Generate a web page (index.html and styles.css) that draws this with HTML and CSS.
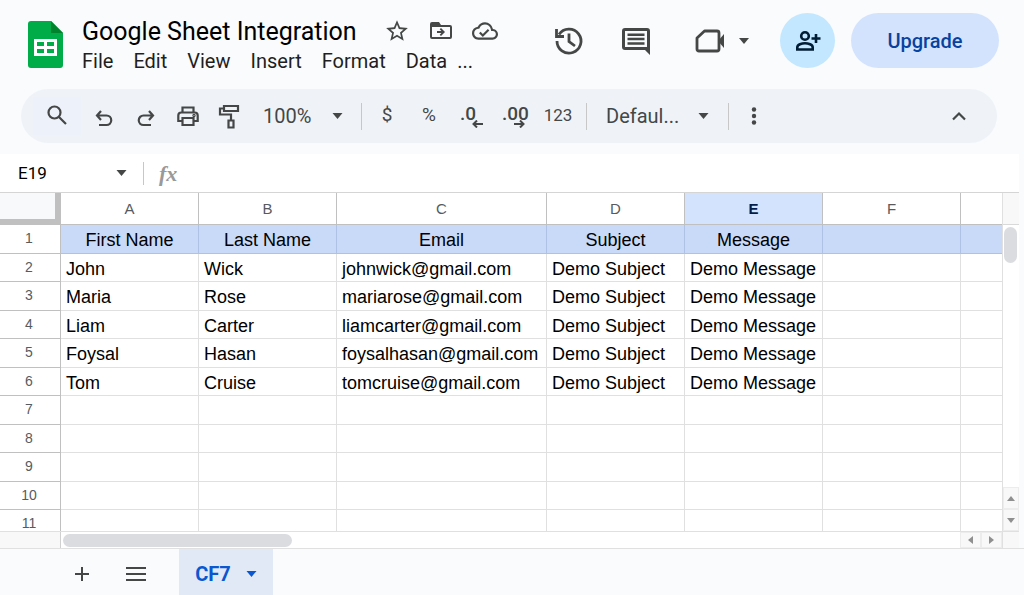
FILE: index.html
```html
<!DOCTYPE html>
<html lang="en">
<head>
    <meta charset="UTF-8">
    <meta name="viewport" content="width=device-width, initial-scale=1.0">
    <title>Google Sheet Integration</title>
    <link rel="stylesheet" href="styles.css">
</head>
<body>
    <header class="header">
        <svg class="logo" width="35" height="47" viewBox="0 0 35 47">
            <path fill="#00ac47" d="M3 0h20l12 12v32a3 3 0 0 1-3 3H3a3 3 0 0 1-3-3V3a3 3 0 0 1 3-3z"/>
            <path fill="#00832d" d="M23 0l12 12H23z"/>
            <path fill="#fff" fill-rule="evenodd" d="M6 18h23v17H6zM9 21v4h7v-4zM19 21v4h7v-4zM9 28v4h7v-4zM19 28v4h7v-4z"/>
        </svg>
        <div class="doc">
            <div class="title-row">
                <h1>Google Sheet Integration</h1>
                <button class="mini" aria-label="Star">
                    <svg width="26" height="26" viewBox="0 0 24 24"><path d="M22 9.24l-7.19-.62L12 2 9.19 8.63 2 9.24l5.46 4.73L5.82 21 12 17.27 18.18 21l-1.63-7.03L22 9.24zM12 15.4l-3.76 2.27 1-4.28-3.32-2.88 4.38-.38L12 6.1l1.71 4.04 4.38.38-3.32 2.88 1 4.28L12 15.4z"/></svg>
                </button>
                <button class="mini" aria-label="Move">
                    <svg width="26" height="24" viewBox="0 0 26 24"><path fill-rule="evenodd" d="M4 3h7l2 3h9a2 2 0 0 1 2 2v10a2 2 0 0 1-2 2H4a2 2 0 0 1-2-2V5a2 2 0 0 1 2-2zM4 8v10h18V8zM13 9l4 4-4 4-1.300-1.300L13.400 14H9v-2h4.400l-1.700-1.700z"/></svg>
                </button>
                <button class="mini" aria-label="Document status">
                    <svg width="26" height="24" viewBox="0 0 24 22"><path d="M19.350 9.040A7.490 7.490 0 0 0 12 3C9.110 3 6.600 4.640 5.350 7.040A5.990 5.990 0 0 0 0 13c0 3.310 2.690 6 6 6h13c2.760 0 5-2.240 5-5 0-2.640-2.050-4.780-4.650-4.960zM19 17H6c-2.210 0-4-1.790-4-4 0-2.050 1.530-3.760 3.560-3.970l1.070-.11.5-.95A5.469 5.469 0 0 1 12 5c2.620 0 4.880 1.860 5.390 4.430l.3 1.500 1.530.11A2.980 2.980 0 0 1 22 14c0 1.650-1.350 3-3 3zm-9-3.200l-2.100-2.100-1.400 1.400L10 16.600l6-6-1.400-1.400z"/></svg>
                </button>
            </div>
            <nav class="menu">
                <button>File</button>
                <button>Edit</button>
                <button>View</button>
                <button>Insert</button>
                <button>Format</button>
                <button>Data</button>
                <button class="more">...</button>
            </nav>
        </div>
        <div class="actions">
            <button aria-label="Version history">
                <svg width="32" height="32" viewBox="0 0 32 32" fill="none" stroke="#444746" stroke-width="2.800">
                    <path d="M6 9.500A12 12 0 1 1 4 16"/>
                    <path d="M3.500 4v7.500H11"/>
                    <path d="M16 8.500v8l6 4.500"/>
                </svg>
            </button>
            <button aria-label="Comments">
                <svg width="32" height="32" viewBox="0 0 32 32">
                    <path fill-rule="evenodd" d="M5 3h22a3 3 0 0 1 3 3v24l-5-5H5a3 3 0 0 1-3-3V6a3 3 0 0 1 3-3zM5 6v16h22V6z"/>
                    <path d="M7.500 8.500h17v2.500h-17zM7.500 12.800h17v2.500h-17zM7.500 17.200h17v2.500h-17z"/>
                </svg>
            </button>
            <button class="meet" aria-label="Join a call">
                <svg width="30" height="30" viewBox="0 0 30 30">
                    <path fill="none" stroke="#444746" stroke-width="2.800" stroke-linejoin="round" d="M9.500 5H22q2 0 2 2v16q0 2-2 2H4q-2 0-2-2V12z"/>
                    <path d="M23 15l6-7v14z"/>
                </svg>
                <svg class="caret" width="10" height="6" viewBox="0 0 10 6"><path d="M0 0h10L5 6z"/></svg>
            </button>
            <button class="share" aria-label="Share">
                <svg width="28" height="24" viewBox="0 0 28 24" fill="none" stroke="#001d35" stroke-width="2.600">
                    <circle cx="11" cy="7" r="3.800"/>
                    <path d="M3.300 20.500v-2.300c0-2.500 4.500-4 7.700-4s7.700 1.500 7.700 4v2.300z"/>
                    <path d="M22 5v9M17.500 9.500h9"/>
                </svg>
            </button>
            <button class="upgrade">Upgrade</button>
        </div>
    </header>

    <div class="toolbar">
        <button class="search" aria-label="Search the menus">
            <svg width="22" height="22" viewBox="0 0 22 22" fill="none" stroke="#444746" stroke-width="2.200"><circle cx="8.500" cy="7.500" r="6"/><path d="M13 12l7 7"/></svg>
        </button>
        <button aria-label="Undo">
            <svg class="low" width="20" height="20" viewBox="0 0 20 20" fill="none" stroke="#444746" stroke-width="2.200"><path d="M7 2L3 6.500 7 11M3 6.500h9.500a4.700 4.700 0 0 1 0 9.500H5"/></svg>
        </button>
        <button aria-label="Redo">
            <svg class="low" width="20" height="20" viewBox="0 0 20 20" fill="none" stroke="#444746" stroke-width="2.200"><path d="M13 2l4 4.500-4 4.500M17 6.500H7.500a4.700 4.700 0 0 0 0 9.500H15"/></svg>
        </button>
        <button aria-label="Print">
            <svg width="24" height="24" viewBox="0 0 24 24" fill="none" stroke="#444746" stroke-width="2.200"><path d="M6.500 8V3.500h11V8M6.500 17H2.300v-5.500q0-3 3-3h13.400q3 0 3 3V17h-4.200M6.500 14h11v7h-11z"/><circle cx="18" cy="11.500" r=".6"/></svg>
        </button>
        <button aria-label="Paint format">
            <svg width="24" height="26" viewBox="0 0 24 26" fill="none" stroke="#444746" stroke-width="2.200"><path d="M6 3h14v5H6zM6 5.500H2v6h11V17M10.500 17.500h5v7h-5z"/></svg>
        </button>
        <label class="drop zoom">
            <select aria-label="Zoom"><option>100%</option></select>
            <svg class="caret" width="11" height="6" viewBox="0 0 10 6"><path d="M0 0h10L5 6z"/></svg>
        </label>
        <span class="sep"></span>
        <button class="dollar">$</button>
        <button class="percent">%</button>
        <button class="decimal" aria-label="Decrease decimal places"><span>.0</span>
            <svg width="11" height="8" viewBox="0 0 11 8" fill="none" stroke="#444746" stroke-width="2"><path d="M11 4H2M5 .5L1.500 4 5 7.500"/></svg>
        </button>
        <button class="decimal" aria-label="Increase decimal places"><span>.00</span>
            <svg width="11" height="8" viewBox="0 0 11 8" fill="none" stroke="#444746" stroke-width="2"><path d="M0 4h9M6 .5L9.500 4 6 7.500"/></svg>
        </button>
        <button class="formats">123</button>
        <span class="sep"></span>
        <label class="drop font">
            <select aria-label="Font"><option>Defaul...</option></select>
            <svg class="caret" width="11" height="6" viewBox="0 0 10 6"><path d="M0 0h10L5 6z"/></svg>
        </label>
        <span class="sep"></span>
        <button aria-label="More">
            <svg width="6" height="18" viewBox="0 0 6 18"><circle cx="3" cy="2.500" r="2.200"/><circle cx="3" cy="9" r="2.200"/><circle cx="3" cy="15.500" r="2.200"/></svg>
        </button>
        <button class="collapse" aria-label="Hide the menus">
            <svg width="16" height="10" viewBox="0 0 16 10" fill="none" stroke="#444746" stroke-width="2.200"><path d="M2 8.500l6-6 6 6"/></svg>
        </button>
    </div>

    <main class="sheet">
        <div class="formula-bar">
            <input class="name-box" aria-label="Name box" value="E19">
            <svg class="caret" width="11" height="6" viewBox="0 0 10 6"><path d="M0 0h10L5 6z"/></svg>
            <span class="fx">fx</span>
        </div>
        <div class="grid">
            <div class="cells">
                <table>
                    <colgroup>
                        <col class="col-num"><col class="col"><col class="col"><col class="col-wide"><col class="col"><col class="col"><col class="col"><col>
                    </colgroup>
                    <thead>
                        <tr><th class="corner"></th><th>A</th><th>B</th><th>C</th><th>D</th><th class="active">E</th><th>F</th><th></th></tr>
                    </thead>
                    <tbody>
                        <tr class="names"><th>1</th><td>First Name</td><td>Last Name</td><td>Email</td><td>Subject</td><td>Message</td><td></td><td></td></tr>
                        <tr><th>2</th><td>John</td><td>Wick</td><td>johnwick@gmail.com</td><td>Demo Subject</td><td>Demo Message</td><td></td><td></td></tr>
                        <tr><th>3</th><td>Maria</td><td>Rose</td><td>mariarose@gmail.com</td><td>Demo Subject</td><td>Demo Message</td><td></td><td></td></tr>
                        <tr><th>4</th><td>Liam</td><td>Carter</td><td>liamcarter@gmail.com</td><td>Demo Subject</td><td>Demo Message</td><td></td><td></td></tr>
                        <tr><th>5</th><td>Foysal</td><td>Hasan</td><td>foysalhasan@gmail.com</td><td>Demo Subject</td><td>Demo Message</td><td></td><td></td></tr>
                        <tr><th>6</th><td>Tom</td><td>Cruise</td><td>tomcruise@gmail.com</td><td>Demo Subject</td><td>Demo Message</td><td></td><td></td></tr>
                        <tr><th>7</th><td></td><td></td><td></td><td></td><td></td><td></td><td></td></tr>
                        <tr><th>8</th><td></td><td></td><td></td><td></td><td></td><td></td><td></td></tr>
                        <tr><th>9</th><td></td><td></td><td></td><td></td><td></td><td></td><td></td></tr>
                        <tr><th>10</th><td></td><td></td><td></td><td></td><td></td><td></td><td></td></tr>
                        <tr><th>11</th><td></td><td></td><td></td><td></td><td></td><td></td><td></td></tr>
                    </tbody>
                </table>
            </div>
            <div class="vscroll">
                <div class="vscroll-top"></div>
                <div class="vthumb"></div>
                <button class="step" aria-label="Scroll up"><svg width="8" height="5" viewBox="0 0 8 5"><path d="M0 5h8L4 0z"/></svg></button>
                <button class="step" aria-label="Scroll down"><svg width="8" height="5" viewBox="0 0 8 5"><path d="M0 0h8L4 5z"/></svg></button>
            </div>
            <div class="hscroll">
                <div class="hscroll-left"></div>
                <div class="hthumb"></div>
                <button class="step" aria-label="Scroll left"><svg width="5" height="8" viewBox="0 0 5 8"><path d="M5 0v8L0 4z"/></svg></button>
                <button class="step" aria-label="Scroll right"><svg width="5" height="8" viewBox="0 0 5 8"><path d="M0 0v8l5-4z"/></svg></button>
            </div>
            <div class="scroll-corner"></div>
        </div>
    </main>

    <footer class="tabs">
        <button aria-label="Add sheet">
            <svg width="16" height="16" viewBox="0 0 16 16"><path d="M7 1h2v6h6v2H9v6H7V9H1V7h6z"/></svg>
        </button>
        <button aria-label="All sheets">
            <svg width="20" height="14" viewBox="0 0 20 14"><path d="M0 0h20v2H0zM0 6h20v2H0zM0 12h20v2H0z"/></svg>
        </button>
        <button class="tab">CF7
            <svg width="11" height="6" viewBox="0 0 10 6"><path d="M0 0h10L5 6z"/></svg>
        </button>
    </footer>
</body>
</html>
```

FILE: styles.css
```css
* {
    box-sizing: border-box;
}
body {
    margin: 0;
    height: 100vh;
    display: flex;
    flex-direction: column;
    overflow: hidden;
    background-color: #f9fbfd;
    color: #1f1f1f;
    font-family: Roboto, "Liberation Sans", sans-serif;
}
button, select, input {
    font-family: inherit;
    color: inherit;
    border: none;
    background: none;
    padding: 0;
    margin: 0;
}
button {
    display: flex;
    align-items: center;
    justify-content: center;
    cursor: pointer;
}
svg {
    display: block;
    flex: none;
    fill: #444746;
}
svg[fill="none"] {
    fill: none;
}

/* header */
.header {
    display: flex;
    align-items: flex-start;
    padding: 13px 25px 0 28px;
    height: 89px;
}
.logo {
    margin: 8px 19px 0 0;
}
.title-row {
    display: flex;
    align-items: center;
    height: 36px;
}
h1 {
    margin: 0 26px 0 0;
    font-size: 25px;
    font-weight: 400;
    color: #000;
}
.mini {
    width: 28px;
    height: 28px;
    margin-right: 16px;
}
.menu {
    display: flex;
    gap: 20px;
}
.menu button {
    font-size: 20px;
    line-height: 24px;
}
.menu .more {
    margin-left: -10px;
}
.actions {
    display: flex;
    align-items: center;
    margin-left: auto;
    height: 55px;
}
.actions button {
    margin-right: 35px;
}
.actions .meet {
    gap: 14px;
    margin: 0 31px 0 8px;
}
.actions .share {
    width: 55px;
    height: 55px;
    border-radius: 50%;
    background-color: #c2e7ff;
    margin-right: 16px;
}
.actions .upgrade {
    width: 148px;
    height: 55px;
    border-radius: 28px;
    background-color: #d3e3fd;
    color: #0842a0;
    font-size: 20px;
    font-weight: 500;
    margin-right: 0;
}

/* toolbar */
.toolbar {
    display: flex;
    align-items: center;
    height: 54px;
    margin: 0 27px 11px 21px;
    padding: 0 17px 0 12px;
    border-radius: 27px;
    background-color: #eff3f8;
    color: #444746;
}
.toolbar button {
    width: 42px;
    height: 38px;
}
.toolbar .search {
    width: 48px;
    margin-right: 2px;
    background-color: #edf2fa;
}
.low {
    margin-top: 6px;
}
.drop {
    display: flex;
    align-items: center;
}
.drop select {
    appearance: none;
    font-size: 20px;
    height: 30px;
}
.zoom {
    width: 106px;
    padding-left: 12px;
}
.zoom select {
    width: 69px;
}
.font {
    width: 133px;
    padding-left: 15px;
}
.font select {
    width: 92px;
}
.sep {
    width: 1px;
    height: 27px;
    margin: 0 4px;
    background-color: #c7c7c7;
}
.toolbar .dollar, .toolbar .percent {
    font-size: 19px;
    padding-bottom: 4px;
}
.toolbar .formats {
    width: 48px;
    font-size: 17px;
    padding-bottom: 2px;
}
.toolbar .decimal {
    position: relative;
    justify-content: flex-start;
    padding: 0 0 6px 10px;
    font-size: 19px;
    font-weight: 500;
}
.decimal svg {
    position: absolute;
    right: 9px;
    bottom: 7px;
}
.toolbar .collapse {
    margin-left: auto;
}

/* sheet */
.sheet {
    flex: 1;
    min-height: 0;
    display: flex;
    flex-direction: column;
    margin-right: 5px;
    background-color: #fff;
}
.formula-bar {
    display: flex;
    align-items: center;
    height: 39px;
    padding-left: 18px;
    border-bottom: 1px solid #d5d5d5;
}
.name-box {
    width: 98px;
    font-size: 17px;
    color: #000;
}
.fx {
    margin-left: 16px;
    padding-left: 15px;
    border-left: 1px solid #c7c7c7;
    font: italic bold 22px/23px "Liberation Serif", serif;
    color: #999;
}
.grid {
    flex: 1;
    min-height: 0;
    display: grid;
    grid-template-columns: minmax(0, 1fr) 17px;
    grid-template-rows: minmax(0, 1fr) 17px;
}
.cells {
    overflow: hidden;
}
table {
    width: 100%;
    table-layout: fixed;
    border-collapse: separate;
    border-spacing: 0;
}
.col-num {
    width: 61px;
}
.col {
    width: 138px;
}
.col-wide {
    width: 210px;
}
th {
    height: 32px;
    padding: 0;
    border-right: 1px solid #c0c0c0;
    border-bottom: 1px solid #c0c0c0;
    font-family: "Liberation Sans", Arial, sans-serif;
    font-size: 15px;
    line-height: 18px;
    font-weight: 400;
    color: #575b5f;
}
tbody th {
    padding: 0 2px 2px 0;
    font-size: 14px;
}
.corner {
    background-color: #f8f9fa;
    border-right: 6px solid #c0c0c0;
    border-bottom: 6px solid #c0c0c0;
}
.active {
    background-color: #d3e3fd;
    color: #041e49;
    font-weight: 700;
}
td {
    padding: 2px 0 0 5px;
    border-right: 1px solid #e0e0e0;
    border-bottom: 1px solid #e0e0e0;
    font-family: "Liberation Sans", Arial, sans-serif;
    font-size: 18px;
    line-height: 20px;
    color: #000;
    white-space: nowrap;
}
tbody tr, tbody th {
    height: 29px;
}
tbody tr:nth-child(even), tbody tr:nth-child(even) th {
    height: 28px;
}
tr > :last-child {
    border-right: none;
}
.names td {
    padding-left: 0;
    text-align: center;
    background-color: #c9daf8;
    border-color: #afc1e4;
}

/* scrollbars */
.vscroll {
    display: flex;
    flex-direction: column;
    border-left: 1px solid #e0e0e0;
}
.vscroll-top {
    height: 32px;
    background-color: #f8f8f8;
    border-bottom: 1px solid #d9d9d9;
}
.vthumb {
    width: 13px;
    height: 36px;
    margin: 2px 1px auto;
    border-radius: 7px;
    background-color: #dadce0;
}
.step {
    background-color: #f8f8f8;
    border: 1px solid #ececec;
}
.step svg {
    fill: #8f8f8f;
}
.vscroll .step {
    height: 22px;
}
.hscroll {
    display: flex;
    align-items: center;
    border-top: 1px solid #e0e0e0;
}
.hscroll-left {
    width: 61px;
    height: 16px;
    background-color: #f8f8f8;
    border-right: 1px solid #d0d0d0;
}
.hthumb {
    width: 229px;
    height: 13px;
    margin: 0 auto 0 2px;
    border-radius: 7px;
    background-color: #dadce0;
}
.hscroll .step {
    width: 21px;
    height: 16px;
}
.scroll-corner {
    background-color: #f8f8f8;
    border: 1px solid #e0e0e0;
    border-width: 1px 0 0 1px;
}

/* sheet tabs */
.tabs {
    display: flex;
    height: 47px;
    border-top: 1px solid #e0e0e0;
    padding-left: 55px;
}
.tabs button {
    width: 54px;
    padding-top: 4px;
}
.tabs .tab {
    width: 94px;
    margin-left: 16px;
    gap: 15px;
    background-color: #e1e9f7;
    color: #0b57d0;
    font-size: 20px;
    font-weight: 700;
}
.tab svg {
    fill: #0b57d0;
}
```
